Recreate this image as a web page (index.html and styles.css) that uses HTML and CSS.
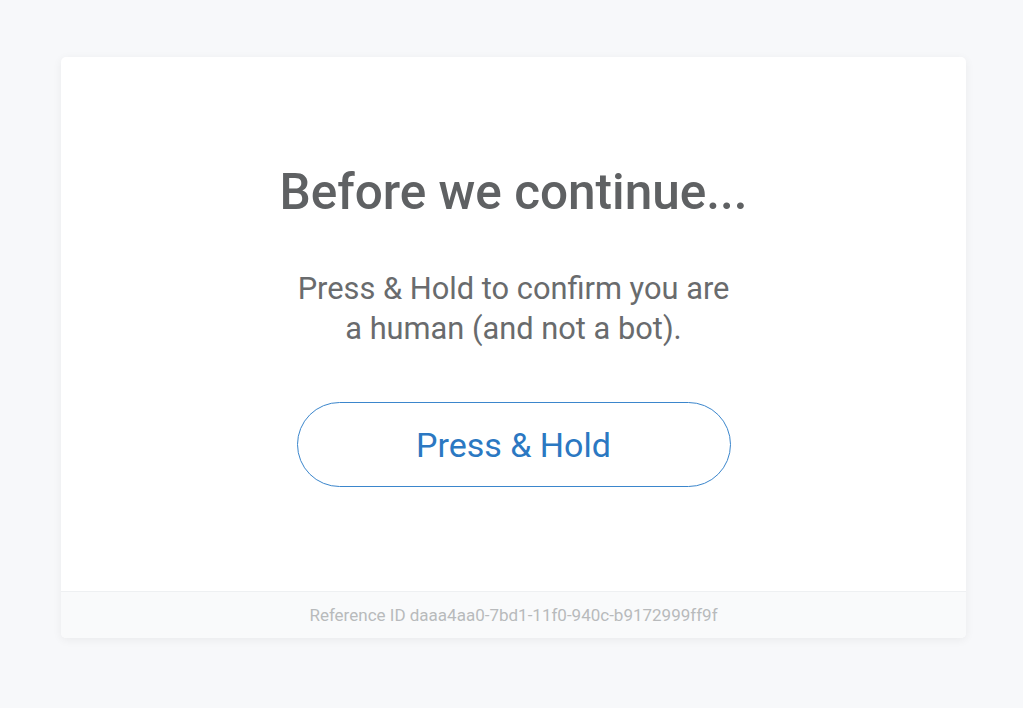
FILE: index.html
```html
<!DOCTYPE html>
<html lang="en">
<head>
    <meta charset="UTF-8">
    <meta name="viewport" content="width=device-width, initial-scale=1.0">
    <title>Before we continue...</title>
    <link rel="stylesheet" href="styles.css">
</head>
<body>
    <div class="challenge-card">
        <div class="challenge-body">
            <h1>Before we continue...</h1>
            <p class="prompt">Press &amp; Hold to confirm you are<br>a human (and not a bot).</p>
            <button class="hold-button">Press &amp; Hold</button>
        </div>
        <div class="challenge-footer">
            Reference ID daaa4aa0-7bd1-11f0-940c-b9172999ff9f
        </div>
    </div>
</body>
</html>
```

FILE: styles.css
```css
body {
    font-family: Roboto, "Liberation Sans", sans-serif;
    background: #f7f8fa;
    margin: 0;
    padding: 57px 0 0;
    min-height: 100vh;
    box-sizing: border-box;
}

.challenge-card {
    width: 905px;
    margin: 0 0 0 61px;
    background: #fff;
    border-radius: 5px;
    box-shadow: 0 2px 10px rgba(0, 0, 0, 0.06);
    overflow: hidden;
}

.challenge-body {
    display: flex;
    flex-direction: column;
    align-items: center;
    padding: 106px 0 104px;
    text-align: center;
}

h1 {
    font-size: 49.5px;
    font-weight: 500;
    color: #5f6163;
    margin: 0;
    line-height: 58px;
}

.prompt {
    font-size: 30.8px;
    color: #696b6d;
    line-height: 40px;
    margin: 48px 0 0;
}

.hold-button {
    width: 434px;
    height: 85px;
    margin-top: 53px;
    background: #fff;
    border: 1px solid #3b86cc;
    border-radius: 43px;
    color: #2b78c2;
    font-family: inherit;
    font-size: 34px;
    cursor: pointer;
}

.challenge-footer {
    background: #f9fafb;
    border-top: 1px solid #eef0f2;
    height: 46px;
    line-height: 46px;
    text-align: center;
    font-size: 17px;
    color: #b8babc;
}
```
